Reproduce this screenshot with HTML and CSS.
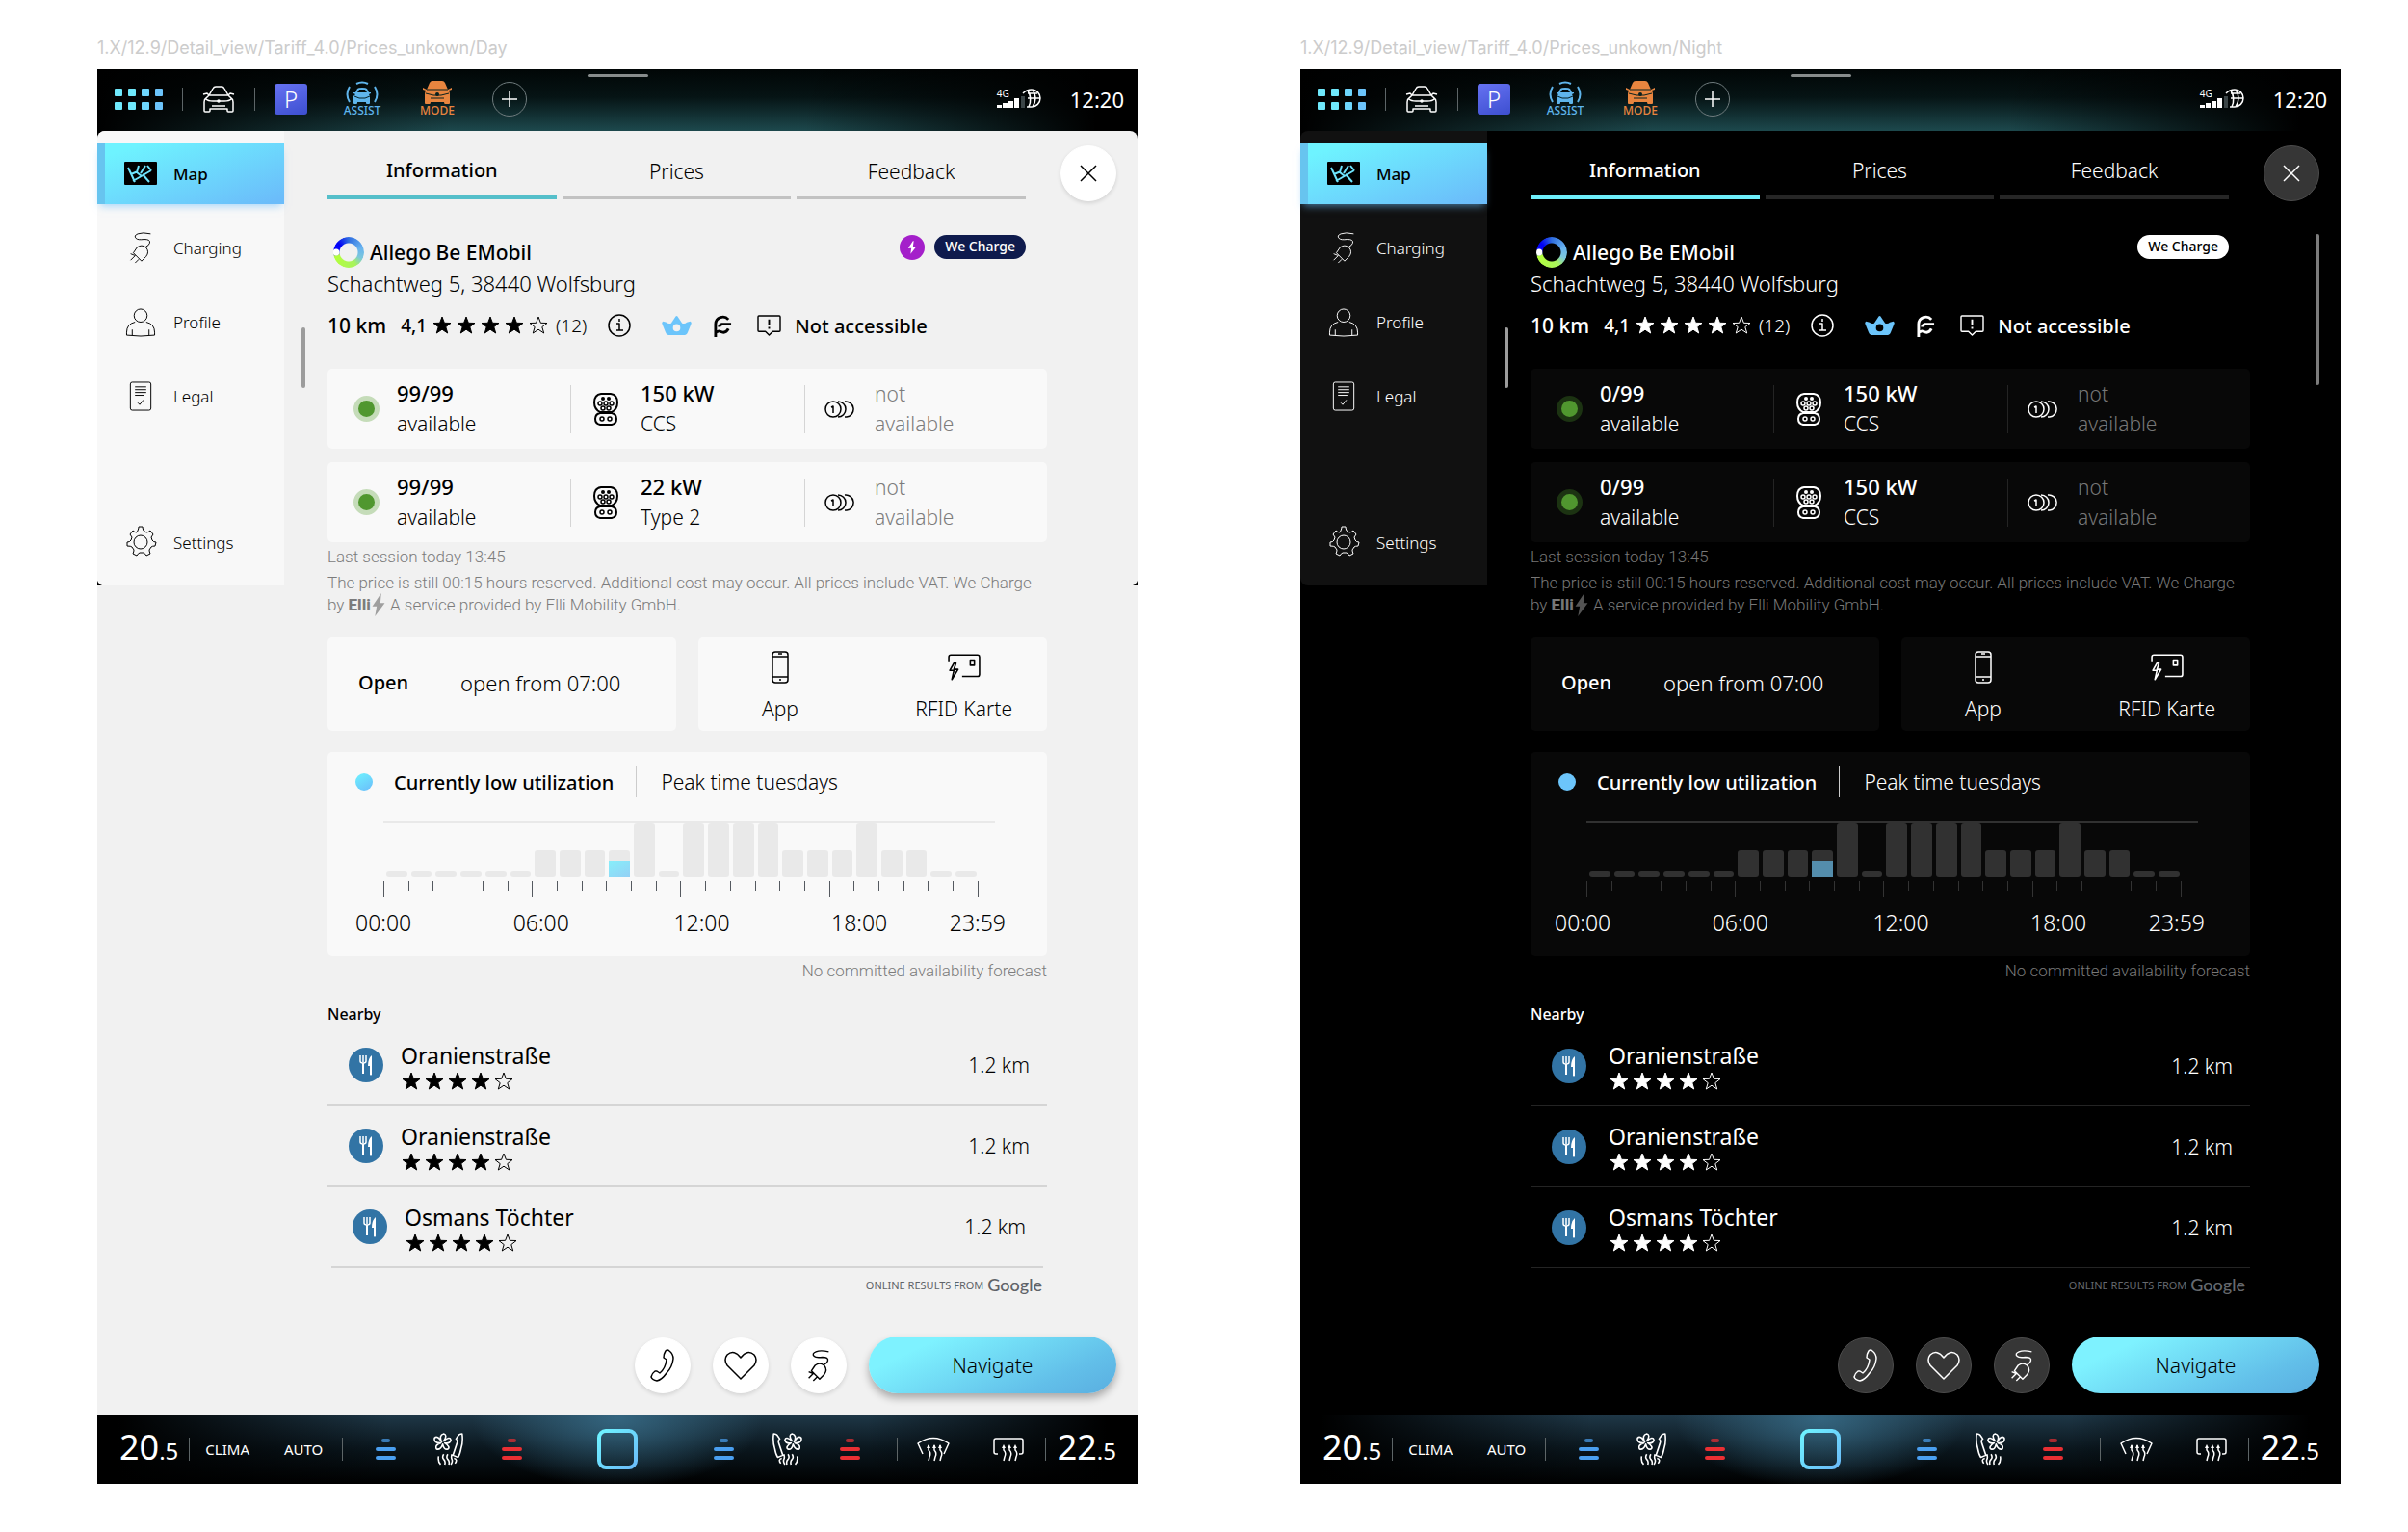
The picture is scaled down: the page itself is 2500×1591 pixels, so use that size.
FILE: index.html
```
<!DOCTYPE html>
<html lang="en">
<head>
  <meta charset="UTF-8">
  <meta name="viewport" content="width=device-width, initial-scale=1.0">
  <title>Charging station detail view</title>
  <link rel="stylesheet" href="styles.css">
</head>
<body>
  <!-- icon sprite -->
  <svg class="sprite" aria-hidden="true">
    <defs>
      <linearGradient id="g-cyan" x1="0" y1="0" x2="1" y2="1">
        <stop offset="0" stop-color="#6ef3ff"/><stop offset="1" stop-color="#6bbcfa"/>
      </linearGradient>
    </defs>
    <symbol id="i-car" viewBox="0 0 34 28">
      <path d="M7 10l4-7q1-2 3-2h6q2 0 3 2l4 7M6 10h22M1 9l4-1 2 2-3 3M33 9l-4-1-2 2 3 3M4 13q-2 1-2 4v9q0 1 1 1h4q1 0 1-1v-2h18v2q0 1 1 1h4q1 0 1-1v-9q0-3-2-4M4 14q2 2 7 2h12q5 0 7-2M10 21h14"/>
      <circle cx="17" cy="16" r="1"/>
    </symbol>
    <symbol id="i-assist" viewBox="0 0 34 24">
      <path fill="currentColor" stroke="none" d="M10 14l-2-1v-1h2l2-4q1-1 5-1t5 1l2 4h2v1l-2 1 1 2v7q0 1-1 1h-2q-1 0-1-1v-1H12v1q0 1-1 1H9q-1 0-1-1v-7zM12 12h10l-2-3h-6z" fill-rule="evenodd"/>
      <path stroke="#062024" stroke-width="1" d="M9 16l5 2h6l5-2"/>
      <path stroke-width="2" d="M11 3q6-3 12 0M4 6q-5 8 0 16M30 6q5 8 0 16"/>
    </symbol>
    <symbol id="i-mode" viewBox="0 0 32 24">
      <path fill="currentColor" stroke="none" d="M5 9l3-7q1-2 3-2h10q2 0 3 2l3 7 4-2v2l-3 1q1 2 1 4v9q0 1-1 1h-4q-1 0-1-2H9q0 2-1 2H4q-1 0-1-1v-9q0-2 1-4L1 9V7z"/>
      <path stroke="#08211f" stroke-width="1" d="M5 9h22M4 13l8 2h8l8-2M9 18h14"/>
      <circle cx="16" cy="14" r="2" fill="#08211f" stroke="none"/>
    </symbol>
    <symbol id="i-signal" viewBox="0 0 46 22">
      <path fill="currentColor" stroke="none" d="M0 17h5v3H0zM6 15h5v5H6zM12 13h5v7h-5zM18 10h5v10h-5z"/>
      <path fill="#3b4547" stroke="none" d="M25 8h4v12h-4z"/>
      <path d="M27 5q4-4 9-4a9 9 0 0 1 0 18h-5M32 2q5 8 1 17M37 1q6 9 0 18M32 5h10M32 10h13"/>
    </symbol>
    <symbol id="i-map" viewBox="0 0 34 24">
      <rect width="34" height="24" rx="1" fill="#000" stroke="none"/>
      <path stroke="#6ee4fd" stroke-width="2" d="M4 6l7 15M9 20l19-11M19 13l7 8M7 13l7-3M15 4l-2 7 5 4M24 4l4 5M22 4l-5 8"/>
    </symbol>
    <symbol id="i-plug" viewBox="0 0 26 36">
      <path d="M24 3Q15 1 10 3 5 5 8 8q2 2 9 1 7 0 6 4-1 3-4 4M5 24l4-6q5-4 10 0 4 5 0 10l-5 5zM7 27l-5 5M11 31l-4 4M2 25l5 2"/>
    </symbol>
    <symbol id="i-profile" viewBox="0 0 32 32">
      <circle cx="16" cy="9" r="7"/>
      <path d="M10 16q-9 2-9 11v3q15 2 30 0v-3q0-9-9-11M7 24v6M25 24v6"/>
    </symbol>
    <symbol id="i-legal" viewBox="0 0 24 32">
      <rect x="1" y="1" width="22" height="30" rx="2"/>
      <path d="M6 6h12M6 9h12M6 12h12M6 15h10M9 23l2 2 4-5"/>
    </symbol>
    <symbol id="i-settings" viewBox="0 0 34 34">
      <circle cx="17" cy="17" r="7"/>
      <path d="M14 5q1-2 1-4h4q0 2 1 4l3 2q2 0 4-2l3 4-2 3 1 3q1 2 4 2l-1 4q-3 0-4 1l-2 3q0 2 1 4l-4 2q-1-2-3-3h-4q-2 1-3 3l-4-2q1-2 1-4l-2-3q-1-1-5-1v-4q3 0 4-2l1-3-2-3 3-4q2 2 4 2z"/>
    </symbol>
    <symbol id="i-close" viewBox="0 0 18 18"><path d="M1 1l16 16M17 1L1 17"/></symbol>
    <symbol id="i-star" viewBox="0 0 20 20"><path d="M10 1l2.400 6.300 6.600.200-5.200 4.100 1.900 6.400-5.700-3.800-5.700 3.800 1.900-6.400L1 7.500l6.600-.200z"/></symbol>
    <symbol id="i-info" viewBox="0 0 24 24">
      <circle cx="12" cy="12" r="11"/><path d="M9 10h3v7M9 17h7M12 5v3"/>
    </symbol>
    <symbol id="i-crown" viewBox="0 0 32 22">
      <path fill="#6cc5fb" stroke="none" fill-rule="evenodd" d="M16 0q1 0 2 2l4 6q3 1 5-1l4-1q1 1 1 2l-4 10q-1 3-3 3H7q-2 0-3-3L0 8q0-1 1-2l4 1q2 2 5 1l4-6q1-2 2-2zM16 9a4 4 0 1 0 0 8 4 4 0 0 0 0-8z"/>
    </symbol>
    <symbol id="i-operator" viewBox="0 0 20 24">
      <path stroke-width="3" d="M2 24V10a8 8 0 0 1 14-5M8 10h11M3 19q2-2 4-1 6 3 9-3M9 10q-3 1-3 3"/>
    </symbol>
    <symbol id="i-alert" viewBox="0 0 26 24">
      <path d="M2 1h22q1 0 1 1v15q0 1-1 1h-7l-4 4-4-4H2q-1 0-1-1V2q0-1 1-1z"/><path stroke-width="2" d="M13 5v6M13 13v2"/>
    </symbol>
    <symbol id="i-bolt" viewBox="0 0 12 16"><path fill="currentColor" stroke="none" d="M7 0L1 9h4l-1 7 7-9H7l1-7z"/></symbol>
    <symbol id="i-ccs" viewBox="0 0 26 34">
      <path stroke-width="2" d="M8 1h10q7 1 7 9 0 7-6 10H7q-6-3-6-10 0-8 7-9zM7 21h12q5 1 5 6t-5 6H7q-5-1-5-6t5-6z"/>
      <g>
        <circle cx="9" cy="27" r="2"/><circle cx="17" cy="27" r="2"/>
        <circle cx="7" cy="11" r="2"/><circle cx="13" cy="11" r="2"/><circle cx="19" cy="11" r="2"/>
        <circle cx="10" cy="16" r="2"/><circle cx="16" cy="16" r="2"/>
      </g>
      <g fill="currentColor" stroke="none"><circle cx="10" cy="6" r="2"/><circle cx="16" cy="6" r="2"/></g>
    </symbol>
    <symbol id="i-coins" viewBox="0 0 32 18">
      <circle cx="9" cy="9" r="8"/><path d="M14 1a8 8 0 0 1 0 16M21 1a8 8 0 0 1 2 16h-2M7 7l2-1v7"/>
    </symbol>
    <symbol id="i-phone" viewBox="0 0 18 34">
      <rect x="1" y="1" width="16" height="32" rx="3"/><path d="M1 6h16M1 27h16M7 3h4M9 29v2"/>
    </symbol>
    <symbol id="i-card" viewBox="0 0 32 26">
      <path d="M1 7V3q0-2 2-2h26q2 0 2 2v17q0 2-2 2H14M6 9l-4 7h4l-2 9 6-10H6l2-6z"/><rect x="22" y="6" width="4" height="5"/>
    </symbol>
    <symbol id="i-food" viewBox="0 0 14 22">
      <path stroke-width="2" d="M4 9v11"/><path d="M1 1v6q0 2 3 2t3-2V1M4 1v7"/>
      <path fill="currentColor" stroke="none" d="M13 1q-4 3-4 11h2v9q1 1 2 0z"/>
    </symbol>
    <symbol id="i-call" viewBox="0 0 26 34">
      <path d="M16 2q2-2 4 0 4 3 4 8-1 9-7 15-5 7-10 8-5-1-6-4 1-4 4-6h2l3 2q6-5 7-14l-3-2q0-4 2-7z"/>
    </symbol>
    <symbol id="i-heart" viewBox="0 0 34 30">
      <path d="M17 29L3 15Q-1 9 3 4q7-6 14 3 7-9 14-3 4 5 0 11z"/>
    </symbol>
    <symbol id="i-seat" viewBox="0 0 30 32">
      <path d="M24 3q1-2 4-2 1 8-1 14-1 6-3 9l-5-2 4-12q1-3-1-4zM8 9Q5 2 10 1q4 1 0 7 6-5 7-1-1 4-6 3 6 4 3 6-4 1-5-5-2 6-6 5-2-4 4-6-7 0-6-5 3-3 7 4zM5 23q-1 5 2 8M10 21q-2 3 0 5t1 5M14 21q-2 3 0 5t1 5M18 21q-1 3 0 5t-1 5M20 25q4 1 1 5"/>
    </symbol>
    <symbol id="i-front" viewBox="0 0 34 26">
      <path d="M6 18L1 7q16-11 32 0l-5 11M12 9v5q3 3 1 7l-1 4M18 9v5q3 3 1 7l-1 4M24 9v5q3 3 1 7l-1 4"/>
      <path fill="currentColor" stroke="none" d="M10 12l2-4 2 4zM16 12l2-4 2 4zM22 12l2-4 2 4z"/>
    </symbol>
    <symbol id="i-rear" viewBox="0 0 32 26">
      <path d="M5 18H3q-2 0-2-2V4q0-2 2-2h26q2 0 2 2v12q0 2-2 2h-2M11 10v4q3 3 1 7l-1 4M17 10v4q3 3 1 7l-1 4M23 10v4q3 3 1 7l-1 4"/>
      <path fill="currentColor" stroke="none" d="M9 12l2-4 2 4zM15 12l2-4 2 4zM21 12l2-4 2 4z"/>
    </symbol>
    <symbol id="i-ellibolt" viewBox="0 0 16 26"><path fill="currentColor" stroke="none" d="M11 0L1 15h5L4 26l11-15h-5z" opacity=".7"/></symbol>
  </svg>

  <main class="board" id="board"></main>

  <script src="script.js"></script>
</body>
</html>
```
FILE: styles.css
```
:root {
  --font: "Noto Sans", "Open Sans", sans-serif;
  --accent: linear-gradient(160deg, #6ef3ff 10%, #6bbcfa 95%);
}

* {
  box-sizing: border-box;
}

body {
  margin: 0;
  background: #fff;
  font-family: var(--font);
  font-size: 21px;
  font-weight: 300;
}

h1, h2, p, ul, ol, dl, dd, figure {
  margin: 0;
  padding: 0;
  font-size: inherit;
  font-weight: inherit;
}

ul, ol {
  list-style: none;
}

button {
  font: inherit;
  color: inherit;
  border: none;
  background: none;
  padding: 0;
  cursor: pointer;
}

a {
  color: inherit;
  text-decoration: none;
}

svg {
  display: block;
  flex: none;
  fill: none;
  stroke: currentColor;
  stroke-width: 1.5;
  stroke-linejoin: round;
}

.sprite {
  position: absolute;
  width: 0;
  height: 0;
}

.board {
  display: grid;
  grid-template-columns: 1fr 1fr;
  gap: 169px;
  padding: 36px 70px 49px 101px;
}

.frame-name {
  height: 36px;
  font: 400 18px/28px Inter, sans-serif;
  color: #ccc;
}

/* themes */
.day {
  --bg: #f1f1f1;
  --text: #000;
  --muted: #7c7c7c;
  --side: #f8f8f8;
  --card: #f9f9f9;
  --line: #d5d5d5;
  --tab: #c2c2c2;
  --tab-on: #55bfca;
  --tab-h: 3px;
  --round: #fff;
  --round-line: #fff;
  --halo: #c5dcb9;
  --bar: #e9e9e9;
  --tick: #555a60;
  --low: linear-gradient(150deg, #6ef3ff, #6bbcfa);
  --bar-low: linear-gradient(150deg, #86eefa, #94d0f5);
  --divider: #ccc;
  --pill: #0f1b4d;
  --pill-text: #fff;
  --google: #5f6368;
}

.night {
  --bg: #000;
  --text: #fff;
  --muted: #777;
  --side: #111;
  --card: #080808;
  --line: #242424;
  --tab: #262626;
  --tab-on: #6ef0fc;
  --tab-h: 5px;
  --round: #363636;
  --round-line: #4c4c4c;
  --halo: #1c3312;
  --bar: #313131;
  --tick: #333;
  --low: #6cc5fb;
  --bar-low: #548dac;
  --divider: #ccc;
  --pill: #fff;
  --pill-text: #000;
  --google: #66696e;
}

.screen {
  background: #000;
  color: var(--text);
}

/* top bar */
.topbar {
  position: relative;
  display: flex;
  align-items: center;
  gap: 20px;
  height: 64px;
  padding: 0 14px 2px 18px;
  color: #fff;
  background:
    linear-gradient(90deg, #000 0, rgba(0, 0, 0, 0) 34%, rgba(0, 0, 0, 0) 68%, #000 96%),
    linear-gradient(180deg, #010606 0, #061415 45%, #1d494d 100%);
}

.handle {
  position: absolute;
  top: 5px;
  left: 50%;
  width: 63px;
  height: 3px;
  margin-left: -31px;
  border-radius: 2px;
  background: #878c8c;
}

.apps {
  display: grid;
  grid-template-columns: repeat(4, 8px);
  gap: 6px;
}

.apps i {
  height: 8px;
  border-radius: 1px;
  background: #6fe8fb;
}

.apps i:nth-child(4n+3) {
  background: #6ed6fc;
}

.apps i:nth-child(4n) {
  background: #6cc4fb;
}

.rule {
  flex: none;
  width: 1px;
  height: 24px;
  background: #5d6567;
}

.quick {
  display: flex;
  align-items: center;
  gap: 36px;
}

.park {
  width: 34px;
  height: 32px;
  border-radius: 3px;
  background: linear-gradient(160deg, #6672f2, #3d4fd0);
  font-size: 24px;
  line-height: 32px;
}

.mode-btn {
  display: flex;
  flex-direction: column;
  align-items: center;
  width: 42px;
  font-size: 12px;
  font-weight: 500;
  line-height: 14px;
}

.assist {
  color: #5fb5ec;
}

.mode {
  color: #e8853f;
}

.plus {
  width: 36px;
  height: 36px;
  border: 1px solid #6f7b7d;
  border-radius: 50%;
  display: grid;
  place-items: center;
}

.status {
  display: flex;
  align-items: center;
  gap: 30px;
  margin-left: auto;
}

.signal {
  position: relative;
}

.signal span {
  position: absolute;
  top: -1px;
  left: 0;
  font-size: 10px;
  font-weight: 400;
  line-height: 12px;
}

.clock {
  font-size: 22px;
  font-weight: 400;
}

/* view under the top bar */
.view {
  position: relative;
  display: flex;
  align-items: flex-start;
  background: var(--bg);
  border-radius: 8px 8px 0 0;
}

.side {
  flex: none;
  width: 194px;
  height: 472px;
  padding-top: 13px;
  background: var(--side);
  border-radius: 8px 0 0 0;
}

.night .side {
  border-radius: 8px 0 0 8px;
}

.side li + li {
  margin-top: 14px;
}

.side li:last-child {
  margin-top: 89px;
}

.side a {
  display: flex;
  align-items: center;
  gap: 17px;
  height: 63px;
  padding: 0 0 1px 28px;
  font-size: 17px;
}

.side a svg {
  width: 34px;
  stroke-width: 1;
}

.side .current {
  color: #000;
  font-weight: 500;
  background: var(--accent);
  border-left: 8px solid #67c4ef;
  padding-left: 20px;
  box-shadow: 0 5px 8px -3px #6bbcfa99;
}

.thumb {
  position: absolute;
  left: 212px;
  top: 204px;
  width: 4px;
  height: 63px;
  border-radius: 2px;
  background: #9c9c9c;
}

.thumb-long {
  position: absolute;
  right: 22px;
  top: 107px;
  width: 4px;
  height: 157px;
  border-radius: 2px;
  background: #7c7c7c;
}

.corner {
  position: absolute;
  top: 464px;
  width: 8px;
  height: 8px;
}

.corner-l {
  left: 0;
  background: radial-gradient(circle at 100% 0, rgba(0, 0, 0, 0) 8px, #000 9px);
}

.corner-r {
  right: 0;
  background: radial-gradient(circle at 0 0, rgba(0, 0, 0, 0) 8px, #000 9px);
}

.detail {
  flex: 1;
  min-width: 0;
  padding: 15px 22px 22px 45px;
}

.detail-head {
  display: flex;
  align-items: flex-start;
  gap: 36px;
}

.tabs {
  flex: 1;
  display: grid;
  grid-template-columns: repeat(3, 1fr);
  gap: 6px;
}

.tabs button {
  height: 56px;
  border-bottom: var(--tab-h) solid var(--tab);
}

.tabs .on {
  border-bottom: 5px solid var(--tab-on);
  font-size: 20px;
  font-weight: 500;
}

.round {
  flex: none;
  display: grid;
  place-items: center;
  width: 58px;
  height: 58px;
  border: 1px solid var(--round-line);
  border-radius: 50%;
  background: var(--round);
}

.day .round {
  box-shadow: 0 2px 4px rgba(0, 0, 0, .12);
}

.info {
  padding: 36px 72px 0 0;
}

.title-row {
  display: flex;
  align-items: center;
  height: 33px;
  padding: 0 22px 0 6px;
}

.logo-ring {
  width: 32px;
  height: 32px;
  border-radius: 50%;
  margin-right: 6px;
  background:
    radial-gradient(circle at 3px 16px, #fff 3px, rgba(255, 255, 255, 0) 4px),
    conic-gradient(#2f6ee0, #69b4ef 20%, #7cc8dc 32%, #a8f35c 42%, #b4ff3c 70%, #0a0aff 76%, #0000f5 86%, #2f6ee0);
  -webkit-mask: radial-gradient(circle, transparent 9px, #000 10px);
  mask: radial-gradient(circle, transparent 9px, #000 10px);
}

.strong {
  font-weight: 500;
}

.badges {
  display: flex;
  align-items: center;
  gap: 10px;
  margin: 0 0 10px auto;
}

.fast {
  display: grid;
  place-items: center;
  width: 26px;
  height: 26px;
  border-radius: 50%;
  background: #a41fca;
  color: #fff;
}

.pill {
  height: 25px;
  padding: 0 11px;
  border-radius: 13px;
  background: var(--pill);
  color: var(--pill-text);
  font-size: 14px;
  font-weight: 500;
  line-height: 24px;
}

.address {
  font-size: 22px;
  line-height: 32px;
}

.facts {
  display: flex;
  align-items: center;
  height: 32px;
  margin: 12px 0 29px;
}

.facts .dist {
  margin-right: 15px;
}

.facts .score {
  margin-right: 6px;
  font-size: 19px;
}

.facts .count {
  margin: 0 22px 0 8px;
  font-size: 19px;
}

.facts .i-crown {
  margin: 0 23px 0 32px;
}

.facts .i-alert {
  margin: 0 14px 0 26px;
}

.facts .access {
  font-size: 20px;
}

.stars {
  display: flex;
  gap: 5px;
}

.stars .full {
  fill: currentColor;
}

.stars svg {
  stroke-width: 1;
}

.card {
  background: var(--card);
  border-radius: 5px;
}

.connector {
  display: grid;
  grid-template-columns: 252fr 243fr 252fr;
  align-items: center;
  height: 83px;
  margin-bottom: 14px;
}

.connector > div {
  display: grid;
  grid-template: 50px / 72px 1fr;
  align-items: center;
  line-height: 31px;
}

.connector > div + div {
  border-left: 1px solid var(--line);
}

.connector .icon {
  display: grid;
  place-items: center;
}

.connector > div:first-child .icon {
  padding-left: 8px;
}

.connector .strong {
  font-size: 22px;
}

.connector .muted {
  width: 100px;
}

.free {
  width: 27px;
  height: 27px;
  border: 5px solid var(--halo);
  border-radius: 50%;
  background: #50972f;
}

.muted {
  color: var(--muted);
}

.note {
  font-family: Roboto, sans-serif;
  font-size: 17px;
  line-height: 23px;
  color: var(--muted);
}

.session {
  margin-top: -10px;
}

.terms {
  margin-top: 4px;
}

.elli {
  font-weight: 800;
}

.note svg {
  display: inline-block;
  margin: -8px 0;
  vertical-align: 2px;
}

.pair {
  display: grid;
  grid-template-columns: 1fr 1fr;
  gap: 23px;
  margin: 22px 0;
}

.hours {
  display: flex;
  align-items: center;
  gap: 54px;
  height: 97px;
  padding: 0 0 4px 32px;
  font-size: 22px;
}

.hours .strong {
  font-size: 20px;
}

.pay {
  display: flex;
  justify-content: space-between;
  padding: 0 36px 0 66px;
}

.pay li {
  display: flex;
  flex-direction: column;
  align-items: center;
  line-height: 24px;
}

.pay svg {
  height: 62px;
}

.usage {
  height: 212px;
  padding: 14px 43px 0 29px;
}

.usage-head {
  display: flex;
  align-items: center;
  height: 34px;
}

.usage-head .strong {
  font-size: 20px;
}

.low-dot {
  width: 18px;
  height: 18px;
  margin-right: 22px;
  border-radius: 50%;
  background: var(--low);
}

.usage-head .rule {
  height: 32px;
  margin: 0 25px 0 23px;
  background: var(--divider);
}

.chart {
  margin: 24px 11px 0 29px;
  border-top: 2px solid var(--bar);
}

.bars {
  display: flex;
  align-items: flex-end;
  height: 56px;
  margin: 0 17px 0 1px;
}

/* hour columns share the width, each bar sits in the middle of its hour */
.bars li {
  flex: 1;
  display: flex;
  align-items: flex-end;
  margin: 0 2px;
  border-radius: 3px;
  background: var(--bar);
}

.bars .now i {
  width: 100%;
  height: 17px;
  background: var(--bar-low);
}

.ticks {
  display: flex;
  justify-content: space-between;
  height: 18px;
  margin: 4px 17px 0 0;
}

.ticks i {
  width: 1px;
  height: 10px;
  background: var(--tick);
}

.ticks i:nth-child(6n+1) {
  height: 17px;
}

.hours-axis {
  display: grid;
  grid-template-columns: 164fr 167fr 164fr 123fr 57fr;
  margin-top: 10px;
  font-size: 23px;
  line-height: 30px;
}

.night .hours-axis {
  margin-left: -4px;
  margin-right: 4px;
}

.forecast {
  margin-top: 4px;
  text-align: right;
}

.nearby-title {
  margin-top: 22px;
  font-size: 16px;
  font-weight: 500;
  line-height: 23px;
}

.nearby li {
  display: flex;
  align-items: center;
  height: 84px;
  padding: 0 18px 0 22px;
  border-bottom: 1px solid var(--line);
}

.day .nearby li {
  border-bottom-width: 2px;
}

.day .nearby li:last-child {
  margin: 0 4px;
}

.food {
  display: grid;
  place-items: center;
  width: 36px;
  height: 36px;
  margin-right: 18px;
  border-radius: 50%;
  background: #3274a5;
  color: #fff;
}

.night .food {
  margin-right: 23px;
}

.place {
  flex: 1;
  font-size: 23px;
  font-weight: 400;
  line-height: 33px;
}

.place .stars {
  gap: 4px;
  padding-left: 1px;
}

.credit {
  display: flex;
  justify-content: flex-end;
  align-items: center;
  gap: 4px;
  height: 24px;
  margin: 5px 5px 42px;
  color: var(--google);
  font-size: 11px;
  font-weight: 400;
}

.credit b {
  font: 500 18px/24px Lato, sans-serif;
}

.actions {
  display: flex;
  justify-content: flex-end;
  align-items: center;
  gap: 23px;
}

.go {
  width: 257px;
  height: 59px;
  border-radius: 30px;
  color: #000;
  background: linear-gradient(155deg, #7ef2ff 20%, #62bfe9 75%, #5aaee0);
}

.day .go {
  box-shadow: 0 5px 8px rgba(0, 0, 0, .3);
}

/* climate bar */
.climate {
  display: grid;
  grid-template-columns: 1fr 42px 1fr;
  align-items: center;
  height: 72px;
  color: #fff;
  background:
    linear-gradient(90deg, #000 2%, rgba(0, 0, 0, 0) 28%, rgba(0, 0, 0, 0) 74%, #000 97%),
    radial-gradient(ellipse 14% 100% at 50% 5%, #34657f, rgba(30, 60, 80, 0)),
    linear-gradient(180deg, #1f3848 0, #0a161d 50%, #000 100%);
}

.climate > div {
  display: flex;
  align-items: center;
}

.left {
  padding-left: 23px;
}

.right {
  padding-right: 22px;
}

.climate .rule {
  height: 24px;
}

.temp {
  font-size: 36px;
  font-weight: 400;
  line-height: 40px;
}

.temp small {
  font-size: 24px;
}

.left .temp {
  margin-right: 11px;
}

.right .temp {
  margin-left: 12px;
}

.label-btn {
  font-size: 15px;
  font-weight: 400;
}

.left .label-btn {
  margin-left: 16px;
}

.left .label-btn + .label-btn {
  margin: 0 20px 0 36px;
}

.seat-group {
  display: flex;
  align-items: center;
  gap: 39px;
}

.left .seat-group {
  margin: 0 78px 0 auto;
}

.right .seat-group {
  margin: 0 38px 0 79px;
}

.right .seat-group .seat {
  transform: scaleX(-1);
}

.level {
  display: grid;
  justify-items: center;
  gap: 5px;
  width: 21px;
}

.level i {
  width: 21px;
  height: 4px;
  border-radius: 2px;
  background: var(--lv);
}

.level i:first-child {
  width: 9px;
  opacity: .7;
}

.cool {
  --lv: #4a9ff0;
}

.heat {
  --lv: #ea2f33;
}

.glass {
  margin-left: 20px;
}

.glass + .glass {
  margin: 0 22px 0 auto;
}

.home {
  width: 42px;
  height: 42px;
}
```
FILE: script.js
```
const SCREENS = [
  {
    theme: 'day',
    name: '1.X/12.9/Detail_view/Tariff_4.0/Prices_unkown/Day',
    free: '99/99',
    connectors: [['150 kW', 'CCS'], ['22 kW', 'Type 2']]
  },
  {
    theme: 'night',
    name: '1.X/12.9/Detail_view/Tariff_4.0/Prices_unkown/Night',
    free: '0/99',
    connectors: [['150 kW', 'CCS'], ['150 kW', 'CCS']]
  }
];

// utilization per hour, height of the bar in percent
const HOURS = [11, 11, 11, 11, 11, 11, 50, 50, 50, 50, 100, 11, 100, 100, 100, 100, 50, 50, 50, 100, 50, 50, 11, 11];
const NOW = 9;
const NEARBY = ['Oranienstraße', 'Oranienstraße', 'Osmans Töchter'];

const icon = (id, w, h, cls = '') =>
  `<svg class="i-${id} ${cls}" width="${w}" height="${h}" aria-hidden="true"><use href="#i-${id}"/></svg>`;

const stars = (size) =>
  `<div class="stars" role="img" aria-label="4 of 5 stars">${[1, 2, 3, 4, 5].map(n => icon('star', size, size, n < 5 ? 'full' : '')).join('')}</div>`;

const level = (kind, label) =>
  `<button class="level ${kind}" aria-label="${label}"><i></i><i></i><i></i></button>`;

const seatGroup = () =>
  `<div class="seat-group">${level('cool', 'Cooler')}<button aria-label="Seat">${icon('seat', 32, 34, 'seat')}</button>${level('heat', 'Warmer')}</div>`;

const rule = '<span class="rule"></span>';

function topBar() {
  return `
  <header class="topbar">
    <span class="handle"></span>
    <button class="apps" aria-label="Apps">${'<i></i>'.repeat(8)}</button>
    ${rule}
    <button aria-label="Vehicle">${icon('car', 34, 28)}</button>
    ${rule}
    <div class="quick">
      <button class="park">P</button>
      <button class="mode-btn assist">${icon('assist', 34, 24)}ASSIST</button>
      <button class="mode-btn mode">${icon('mode', 32, 24)}MODE</button>
      <button class="plus" aria-label="Add"><svg width="16" height="16"><path d="M8 0v16M0 8h16"/></svg></button>
    </div>
    <div class="status">
      <div class="signal"><span>4G</span>${icon('signal', 46, 22)}</div>
      <time class="clock">12:20</time>
    </div>
  </header>`;
}

function sideNav() {
  const items = [['Map', 'map', 24], ['Charging', 'plug', 34], ['Profile', 'profile', 31], ['Legal', 'legal', 31], ['Settings', 'settings', 34]];
  return `<nav class="side"><ul>${items.map(([label, id, h], n) =>
    `<li><a href="#" class="${n ? '' : 'current'}">${icon(id, 34, h)}${label}</a></li>`).join('')}</ul></nav>`;
}

function connector(free, [power, type]) {
  return `
  <div class="card connector">
    <div><span class="icon"><span class="free"></span></span><p><span class="strong">${free}</span><br>available</p></div>
    <div><span class="icon">${icon('ccs', 26, 34)}</span><p><span class="strong">${power}</span><br>${type}</p></div>
    <div><span class="icon">${icon('coins', 34, 18)}</span><p class="muted">not available</p></div>
  </div>`;
}

function usage() {
  return `
  <section class="card usage">
    <div class="usage-head"><span class="low-dot"></span><h2 class="strong">Currently low utilization</h2>${rule}<p>Peak time tuesdays</p></div>
    <div class="chart">
      <ul class="bars">${HOURS.map((h, n) => `<li class="${n === NOW ? 'now' : ''}" style="height: ${h}%">${n === NOW ? '<i></i>' : ''}</li>`).join('')}</ul>
      <div class="ticks">${'<i></i>'.repeat(25)}</div>
    </div>
    <div class="hours-axis"><span>00:00</span><span>06:00</span><span>12:00</span><span>18:00</span><span>23:59</span></div>
  </section>`;
}

function screen(s) {
  const day = s.theme === 'day';
  return `
  <article class="${s.theme}">
    <h1 class="frame-name">${s.name}</h1>
    <div class="screen">
      ${topBar()}
      <div class="view">
        ${sideNav()}
        <span class="thumb"></span>
        ${day ? '<span class="corner corner-l"></span><span class="corner corner-r"></span>' : '<span class="thumb-long"></span>'}
        <div class="detail">
          <div class="detail-head">
            <div class="tabs" role="tablist">
              <button class="on" role="tab" aria-selected="true">Information</button>
              <button role="tab">Prices</button>
              <button role="tab">Feedback</button>
            </div>
            <button class="round" aria-label="Close">${icon('close', 18, 18)}</button>
          </div>
          <div class="info">
            <div class="title-row">
              <span class="logo-ring"></span><h2 class="strong">Allego Be EMobil</h2>
              <div class="badges">${day ? `<span class="fast">${icon('bolt', 10, 14)}</span>` : ''}<span class="pill">We Charge</span></div>
            </div>
            <p class="address">Schachtweg 5, 38440 Wolfsburg</p>
            <div class="facts">
              <span class="dist strong">10 km</span><span class="score strong">4,1</span>${stars(20)}<span class="count">(12)</span>
              <button aria-label="Rating info">${icon('info', 24, 24)}</button>
              ${icon('crown', 31, 21)}${icon('operator', 19, 23)}${icon('alert', 25, 23)}
              <span class="access strong">Not accessible</span>
            </div>
            ${s.connectors.map(c => connector(s.free, c)).join('')}
            <p class="note session">Last session today 13:45</p>
            <p class="note terms">The price is still 00:15 hours reserved. Additional cost may occur. All prices include VAT. We Charge by <span class="elli">Elli</span>${icon('ellibolt', 16, 24)} A service provided by Elli Mobility GmbH.</p>
            <div class="pair">
              <div class="card hours"><span class="strong">Open</span><span>open from 07:00</span></div>
              <ul class="card pay"><li>${icon('phone', 18, 34)}App</li><li>${icon('card', 34, 28)}RFID Karte</li></ul>
            </div>
            ${usage()}
            <p class="note forecast">No committed availability forecast</p>
            <h2 class="nearby-title">Nearby</h2>
            <ul class="nearby">${NEARBY.map(n => `
              <li><span class="food">${icon('food', 14, 22)}</span><div class="place">${n}${stars(20)}</div><span>1.2 km</span></li>`).join('')}
            </ul>
            <p class="credit">ONLINE RESULTS FROM <b>Google</b></p>
          </div>
          <div class="actions">
            <button class="round" aria-label="Call">${icon('call', 26, 34)}</button>
            <button class="round" aria-label="Favourite">${icon('heart', 34, 30)}</button>
            <button class="round" aria-label="Charge">${icon('plug', 26, 34)}</button>
            <button class="go">Navigate</button>
          </div>
        </div>
      </div>
      <footer class="climate">
        <div class="left">
          <span class="temp">20<small>.5</small></span>${rule}
          <button class="label-btn">CLIMA</button><button class="label-btn">AUTO</button>${rule}
          ${seatGroup()}
        </div>
        <button class="home" aria-label="Home"><svg width="42" height="42"><rect x="2" y="2" width="38" height="38" rx="7" stroke="url(#g-cyan)" stroke-width="4"/></svg></button>
        <div class="right">
          ${seatGroup()}${rule}
          <button class="glass" aria-label="Front defrost">${icon('front', 34, 26)}</button>
          <button class="glass" aria-label="Rear defrost">${icon('rear', 32, 26)}</button>
          ${rule}<span class="temp">22<small>.5</small></span>
        </div>
      </footer>
    </div>
  </article>`;
}

document.getElementById('board').innerHTML = SCREENS.map(screen).join('');
```
